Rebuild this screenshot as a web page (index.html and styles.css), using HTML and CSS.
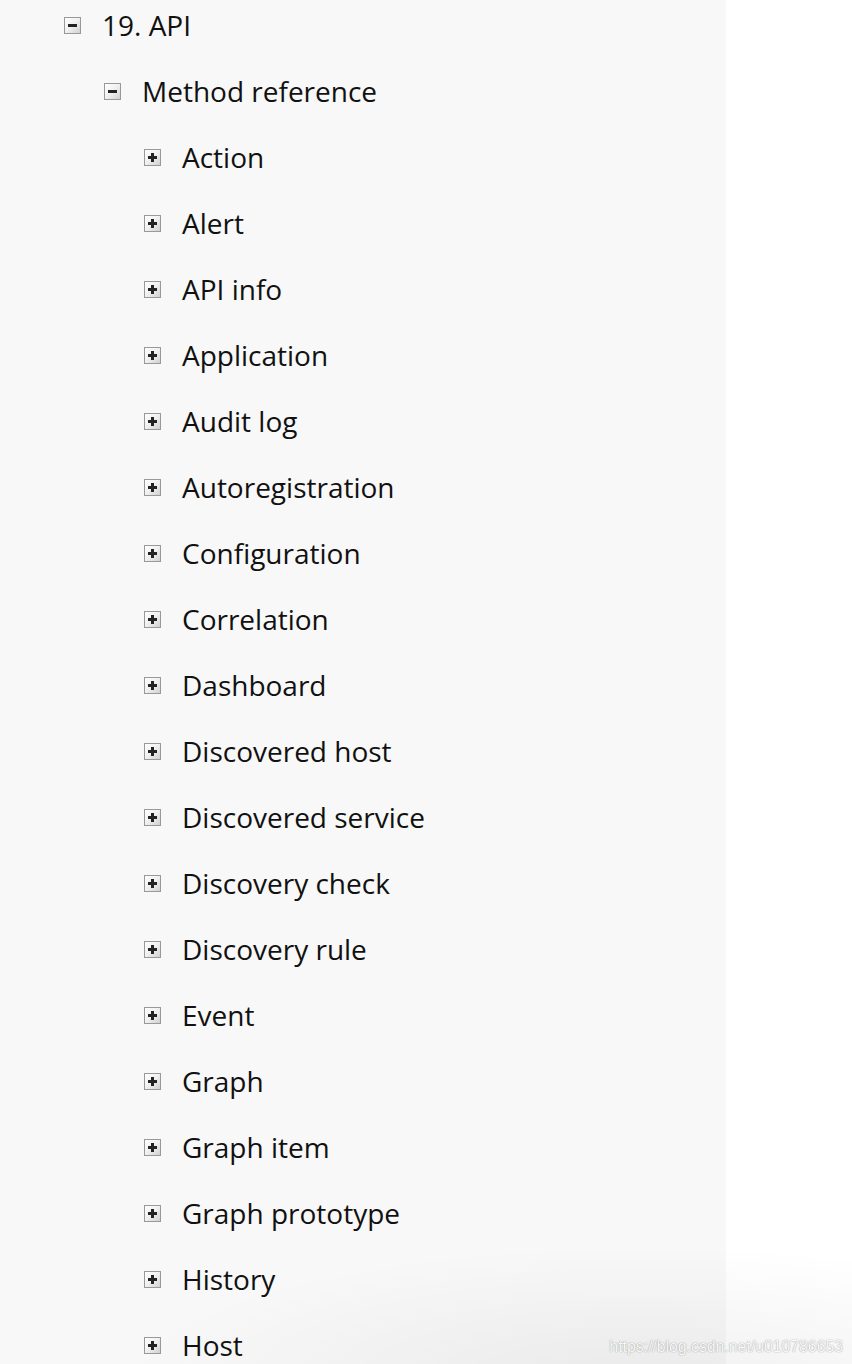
FILE: index.html
```html
<!DOCTYPE html>
<html>
<head>
<meta charset="utf-8">
<link rel="stylesheet" href="styles.css">
</head>
<body>
<div class="page">
  <nav class="sidebar">
    <ul class="tree">
      <li>
        <div class="row"><span class="tog minus"></span><span class="label">19. API</span></div>
        <ul class="tree">
          <li>
            <div class="row"><span class="tog minus"></span><span class="label">Method reference</span></div>
            <ul class="tree">
              <li><div class="row"><span class="tog plus"></span><span class="label">Action</span></div></li>
              <li><div class="row"><span class="tog plus"></span><span class="label">Alert</span></div></li>
              <li><div class="row"><span class="tog plus"></span><span class="label">API info</span></div></li>
              <li><div class="row"><span class="tog plus"></span><span class="label">Application</span></div></li>
              <li><div class="row"><span class="tog plus"></span><span class="label">Audit log</span></div></li>
              <li><div class="row"><span class="tog plus"></span><span class="label">Autoregistration</span></div></li>
              <li><div class="row"><span class="tog plus"></span><span class="label">Configuration</span></div></li>
              <li><div class="row"><span class="tog plus"></span><span class="label">Correlation</span></div></li>
              <li><div class="row"><span class="tog plus"></span><span class="label">Dashboard</span></div></li>
              <li><div class="row"><span class="tog plus"></span><span class="label">Discovered host</span></div></li>
              <li><div class="row"><span class="tog plus"></span><span class="label">Discovered service</span></div></li>
              <li><div class="row"><span class="tog plus"></span><span class="label">Discovery check</span></div></li>
              <li><div class="row"><span class="tog plus"></span><span class="label">Discovery rule</span></div></li>
              <li><div class="row"><span class="tog plus"></span><span class="label">Event</span></div></li>
              <li><div class="row"><span class="tog plus"></span><span class="label">Graph</span></div></li>
              <li><div class="row"><span class="tog plus"></span><span class="label">Graph item</span></div></li>
              <li><div class="row"><span class="tog plus"></span><span class="label">Graph prototype</span></div></li>
              <li><div class="row"><span class="tog plus"></span><span class="label">History</span></div></li>
              <li><div class="row"><span class="tog plus"></span><span class="label">Host</span></div></li>
            </ul>
          </li>
        </ul>
      </li>
    </ul>
  </nav>
  <div class="main"></div>
  <div class="shade"></div>
  <div class="watermark">https://blog.csdn.net/u010786653</div>
</div>
</body>
</html>
```
FILE: styles.css
```css
html, body {
  margin: 0;
  padding: 0;
  background: #ffffff;
}
.page {
  position: relative;
  display: flex;
  width: 852px;
  height: 1364px;
  overflow: hidden;
}
.sidebar {
  width: 726px;
  background: #f8f8f8;
  flex: none;
}
.main {
  flex: 1;
  background: #ffffff;
}
.tree {
  list-style: none;
  margin: 0;
  padding: 0 0 0 40px;
}
.sidebar > .tree {
  padding-left: 63px;
}
.row {
  display: flex;
  align-items: center;
  height: 66px;
  margin-top: -8px;
  margin-bottom: 8px;
}
.tog {
  position: relative;
  width: 15px;
  height: 15px;
  border: 1px solid #999999;
  background: linear-gradient(135deg, #ffffff 0%, #f0f0f0 50%, #d0d0d0 100%);
  box-sizing: content-box;
  flex: none;
  margin-right: 21px;
  margin-left: 1px;
  margin-top: 1px;
}
.tog::before,
.tog::after {
  content: "";
  position: absolute;
  background: #222;
}
.tog::before {
  left: 3px;
  top: 6px;
  width: 9px;
  height: 3px;
}
.tog.plus::after {
  left: 6px;
  top: 3px;
  width: 3px;
  height: 9px;
}
.label {
  font-family: "Open Sans", "Noto Sans", sans-serif;
  font-size: 28px;
  color: #111111;
  white-space: nowrap;
}
.shade {
  position: absolute;
  left: 0;
  right: 0;
  bottom: 0;
  height: 140px;
  background: radial-gradient(ellipse 520px 140px at 640px 160px, rgba(0,0,0,0.06), rgba(0,0,0,0) 100%);
  pointer-events: none;
}
.watermark {
  position: absolute;
  right: 9px;
  bottom: 8px;
  font-family: "Liberation Sans", Arial, sans-serif;
  font-size: 15.8px;
  color: rgba(255,255,255,0.95);
  text-shadow: 0 0 1px rgba(0,0,0,0.35), 0 0 2px rgba(0,0,0,0.15);
}
```
